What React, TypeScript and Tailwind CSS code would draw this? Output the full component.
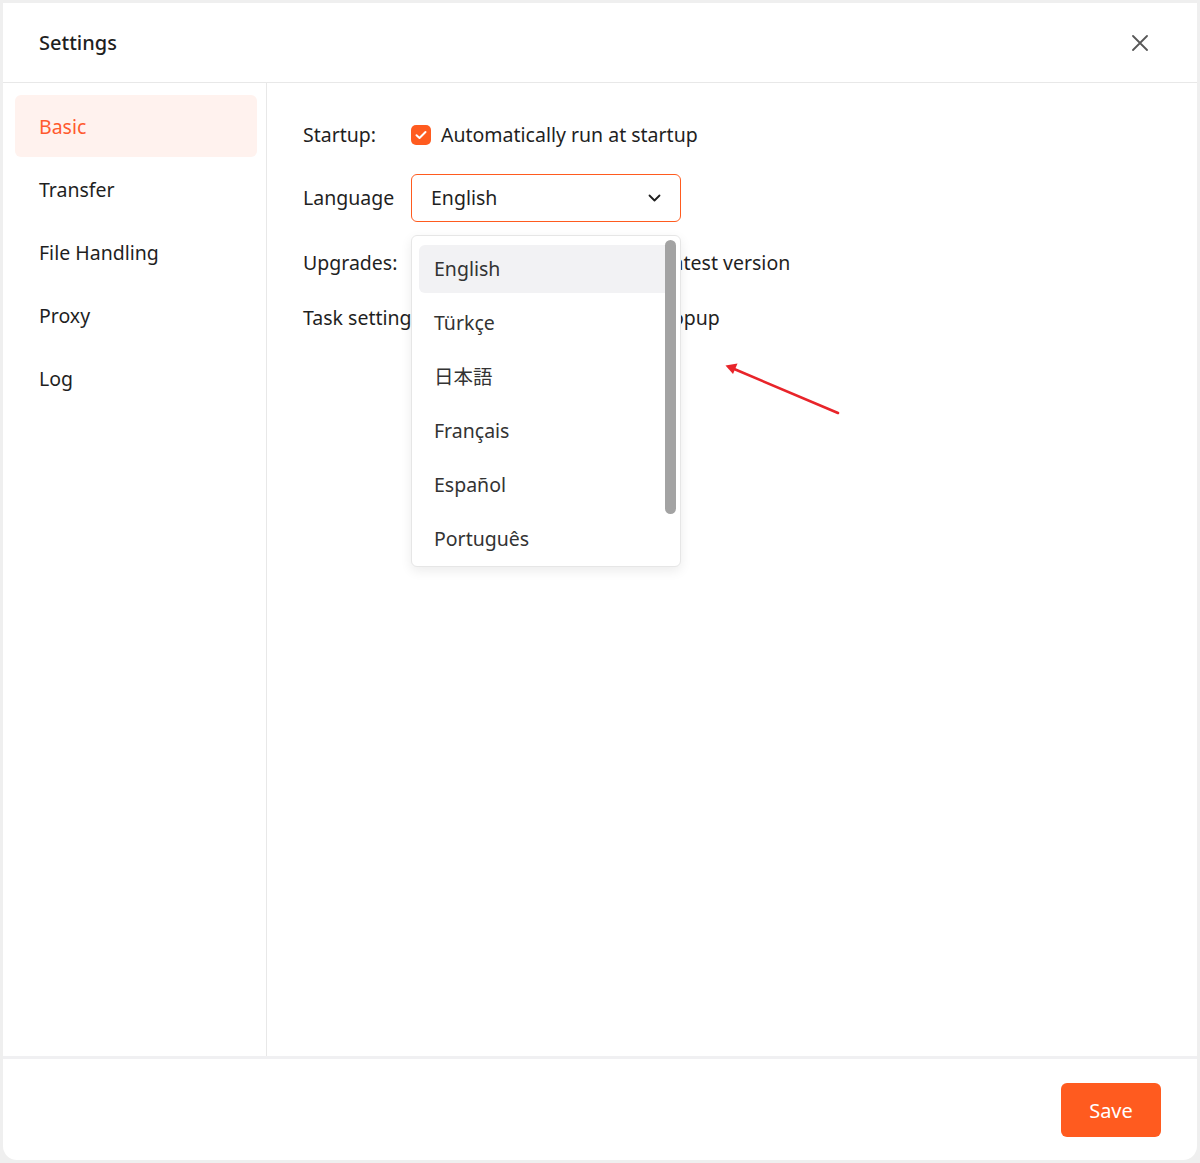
import { useState } from 'react';

const NAV_ITEMS = ['Basic', 'Transfer', 'File Handling', 'Proxy', 'Log'];
const LANGUAGES = ['English', 'Türkçe', '日本語', 'Français', 'Español', 'Português'];

const FONT = "font-['Noto_Sans','Noto_Sans_CJK_JP',sans-serif]";

function Checkbox() {
  return (
    <span className="flex h-[20px] w-[20px] shrink-0 items-center justify-center rounded-[5px] bg-[#ff5b1f]">
      <svg width="12" height="10" viewBox="0 0 12 10" fill="none">
        <path d="M1.5 5.2 4.5 8 10.5 2" stroke="white" strokeWidth="2" strokeLinecap="round" strokeLinejoin="round" />
      </svg>
    </span>
  );
}

export default function App() {
  const [active, setActive] = useState('Basic');

  return (
    <div className={`${FONT} h-[1163px] w-[1200px] bg-[#efefef] px-[3px] pt-[3px] pb-[3px] text-[#1f1f1f]`}>
      <div className="flex h-full flex-col overflow-hidden rounded-b-[14px] bg-white">
        {/* Header */}
        <div className="flex h-[80px] shrink-0 items-center justify-between border-b border-[#e8e8e8] pl-[36px] pr-[49px]">
          <h1 className="text-[20px] font-medium leading-none">Settings</h1>
          <svg width="16" height="16" viewBox="0 0 16 16" fill="none">
            <path d="M1 1 15 15M15 1 1 15" stroke="#585858" strokeWidth="1.8" strokeLinecap="round" />
          </svg>
        </div>

        {/* Body */}
        <div className="flex min-h-0 flex-1">
          <nav className="flex w-[264px] shrink-0 flex-col gap-[1px] border-r border-[#e8e8e8] pt-[12px] pl-[12px] pr-[9px]">
            {NAV_ITEMS.map((item) => (
              <button
                key={item}
                onClick={() => setActive(item)}
                className={[
                  'flex h-[62px] items-center rounded-[6px] pt-[2px] pl-[24px] text-left text-[19.5px]',
                  active === item ? 'bg-[#fff2ee] text-[#ff5a2e]' : 'text-[#1f1f1f]',
                ].join(' ')}
              >
                {item}
              </button>
            ))}
          </nav>

          <div className="flex flex-1 flex-col pt-[32px] pl-[36px] text-[19.5px]">
            <div className="flex h-[40px] items-center">
              <span className="w-[108px] shrink-0">Startup:</span>
              <Checkbox />
              <span className="ml-[10px]">Automatically run at startup</span>
            </div>

            <div className="mt-[19px] flex h-[48px] items-center">
              <span className="w-[108px] shrink-0">Language</span>
              <div className="relative">
                <div className="flex h-[48px] w-[270px] items-center justify-between rounded-[6px] border border-[#ff5b1f] pl-[19px] pr-[19px]">
                  <span>English</span>
                  <svg width="13" height="8" viewBox="0 0 13 8" fill="none">
                    <path d="M1.5 1.5 6.5 6.5 11.5 1.5" stroke="#1f1f1f" strokeWidth="1.8" strokeLinecap="round" strokeLinejoin="round" />
                  </svg>
                </div>

                {/* Dropdown */}
                <div className="absolute top-[61px] left-0 z-10 h-[332px] w-[270px] overflow-hidden rounded-[6px] border border-[#e6e6e6] bg-white shadow-[0_4px_12px_rgba(0,0,0,0.08)]">
                  <div className="flex flex-col gap-[6px] pt-[9px] pl-[7px] pr-[5px]">
                    {LANGUAGES.map((lang, i) => (
                      <div
                        key={lang}
                        className={[
                          'flex h-[48px] shrink-0 items-center rounded-[6px] pl-[15px] text-[#333333]',
                          i === 0 ? 'bg-[#f2f2f4]' : '',
                        ].join(' ')}
                      >
                        {lang}
                      </div>
                    ))}
                  </div>
                  <div className="absolute top-[4px] right-[4px] h-[274px] w-[11px] rounded-full bg-[#a3a3a3]" />
                </div>
              </div>
            </div>

            <div className="mt-[21px] flex h-[40px] items-center">
              <span className="w-[108px] shrink-0">Upgrades:</span>
              <Checkbox />
              <span className="ml-[10px]">Check for and install the latest version</span>
            </div>

            <div className="mt-[15px] flex h-[40px] items-center">
              <span className="w-[134px] shrink-0">Task settings:</span>
              <Checkbox />
              <span className="ml-[10px]">Show download task popup</span>
            </div>
          </div>
        </div>

        {/* Footer */}
        <div className="flex h-[104px] shrink-0 items-start justify-end border-t-[3px] border-[#f0f0f2] pt-[24px] pr-[36px]">
          <button className="h-[54px] w-[100px] rounded-[6px] bg-[#ff5b1f] pt-[2px] text-[20px] text-white">Save</button>
        </div>
      </div>

      {/* Annotation arrow */}
      <svg className="pointer-events-none absolute top-0 left-0" width="1200" height="1163">
        <line x1="838" y1="413" x2="733" y2="368.5" stroke="#e8242a" strokeWidth="2.6" strokeLinecap="round" />
        <path d="M725.5 365.5 737.5 363.5 733 374 Z" fill="#e8242a" />
      </svg>
    </div>
  );
}
